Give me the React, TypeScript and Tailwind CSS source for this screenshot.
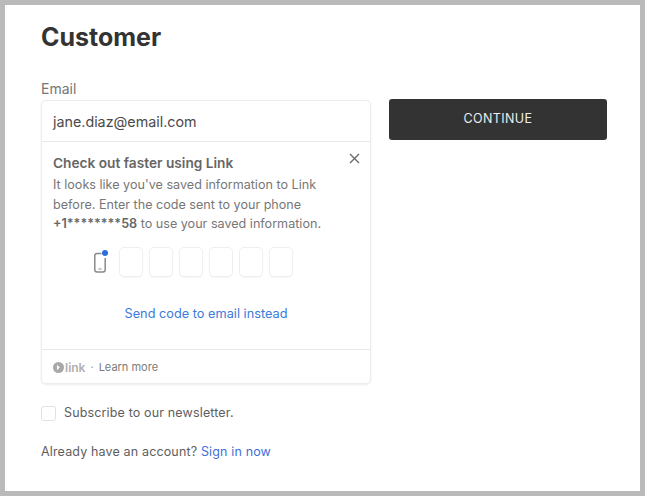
import React from "react";

const sans = "font-['Inter','Liberation_Sans',sans-serif]";

export default function App() {
  return (
    <div className="h-[496px] w-[645px] overflow-hidden bg-[#bababa] p-[5px]">
      <div className={`h-[486px] w-[635px] bg-white pl-[36px] pt-[17px] ${sans}`}>
        <h1 className="m-0 text-[25px] font-bold leading-[30px] tracking-[0px] text-[#333333]">Customer</h1>
        <div className="mt-[27px] text-[14px] leading-[20px] text-[#757575]">Email</div>
        <div className="mt-[1px] flex items-start gap-[18px]">
          <div className="w-[330px] rounded-[5px] border border-[#ececec] shadow-[0_1px_2px_rgba(0,0,0,0.08)]">
            <div className="flex h-[40px] items-center px-[11px] pt-[2px] text-[14.3px] text-[#4a4a4a]">jane.diaz@email.com</div>
            <div className="relative border-t border-[#e9e9e9] px-[11px] pt-[11px]">
              <button className="absolute right-[10px] top-[11px] text-[#6b6b6b]" aria-label="Close">
                <svg width="11" height="11" viewBox="0 0 11 11" fill="none" stroke="currentColor" strokeWidth="1.4">
                  <path d="M1 1l9 9M10 1l-9 9" />
                </svg>
              </button>
              <div className="text-[13.7px] font-semibold leading-[20px] text-[#666666]">Check out faster using Link</div>
              <p className="m-0 mt-[2px] text-[12.6px] leading-[19.5px] text-[#777777]">
                It looks like you've saved information to Link
                <br />
                before. Enter the code sent to your phone
                <br />
                <span className="font-semibold text-[#666666]">+1********58</span> to use your saved information.
              </p>
              <div className="mt-[13.5px] flex items-center pl-[42px]">
                <div className="relative mr-[12px] h-[20px] w-[12px] -translate-x-[2px]">
                  <svg width="15" height="24" viewBox="0 0 15 24" fill="none" className="absolute -top-[2px] left-0">
                    <path d="M8.5 3.5H4A2.2 2.2 0 0 0 1.8 5.7v14A2.2 2.2 0 0 0 4 21.9h6a2.2 2.2 0 0 0 2.2-2.2V8" stroke="#8a8a8a" strokeWidth="1.5" />
                    <path d="M5.5 19h3" stroke="#8a8a8a" strokeWidth="1" />
                  </svg>
                  <span className="absolute -top-[2px] left-[9px] h-[6px] w-[6px] rounded-full bg-[#2a6fdb]" />
                </div>
                <div className="flex gap-[6px]">
                  {[0, 1, 2, 3, 4, 5].map((i) => (
                    <div key={i} className="h-[30px] w-[24px] rounded-[5px] border border-[#efefef] shadow-[0_1px_1px_rgba(0,0,0,0.04)]" />
                  ))}
                </div>
              </div>
              <div className="mt-[27px] text-center text-[12.75px] leading-[20px] text-[#3b7bd9]">Send code to email instead</div>
              <div className="h-[25px]" />
            </div>
            <div className="flex h-[34px] items-center border-t border-[#e9e9e9] px-[11px] pt-[2px] text-[11px] text-[#7a7a7a]">
              <svg width="11" height="11" viewBox="0 0 11 11">
                <circle cx="5.5" cy="5.5" r="5.5" fill="#a8a8a8" />
                <path d="M4 2.8l2.8 2.7L4 8.2z" fill="#fff" />
              </svg>
              <span className="ml-[1px] text-[12px] font-semibold text-[#b0b0b0]">link</span>
              <span className="mx-[5px] text-[#9a9a9a]">·</span>
              <span>Learn more</span>
            </div>
          </div>
          <button className="-mt-[1px] flex h-[41px] w-[218px] items-center justify-center rounded-[3px] bg-[#333333] text-[12.5px] font-normal tracking-[0.4px] text-[#eeeeee]">
            CONTINUE
          </button>
        </div>
        <div className="mt-[21px] flex items-center gap-[8px] text-[12.5px] leading-[16px] text-[#5e5e5e]">
          <div className="h-[15px] w-[15px] rounded-[3px] border border-[#e2e2e2]" />
          <span className="tracking-[0.15px]">Subscribe to our newsletter.</span>
        </div>
        <div className="mt-[23px] text-[12.5px] leading-[16px] tracking-[0.15px] text-[#5e5e5e]">
          Already have an account? <span className="text-[#3f6fd8]">Sign in now</span>
        </div>
      </div>
    </div>
  );
}
